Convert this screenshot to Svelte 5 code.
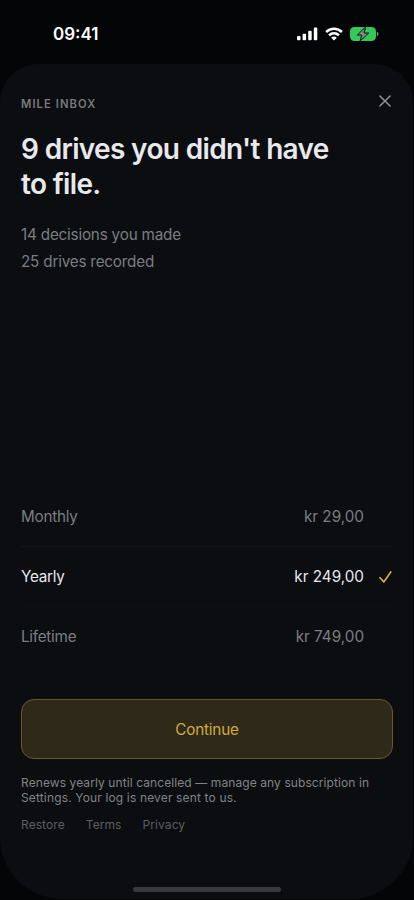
<script>
	let selected = $state('yearly');

	const stats = ['14 decisions you made', '25 drives recorded'];

	const plans = [
		{ id: 'monthly', name: 'Monthly', price: 'kr 29,00' },
		{ id: 'yearly', name: 'Yearly', price: 'kr 249,00' },
		{ id: 'lifetime', name: 'Lifetime', price: 'kr 749,00' }
	];
</script>

<div class="screen">
	<header class="status">
		<span class="time">09:41</span>
		<div class="indicators">
			<svg width="21" height="14" viewBox="0 0 21 14" fill="#fff">
				<rect x="0" y="9" width="3.5" height="4.3" rx="1.1" />
				<rect x="5.6" y="6.7" width="3.5" height="6.6" rx="1.1" />
				<rect x="11.2" y="3.8" width="3.5" height="9.5" rx="1.1" />
				<rect x="16.8" y="0.6" width="3.5" height="12.7" rx="1.1" />
			</svg>
			<svg width="18" height="14" viewBox="0 0 18 14" fill="none" stroke="#fff" stroke-width="2.5">
				<path d="M1.1 5C5.5 .7 12.5 .7 16.9 5" />
				<path d="M4.1 8.3c2.8-2.8 7-2.8 9.8 0" />
				<path d="M9 13.5 6.2 10.7c1.6-1.5 4-1.5 5.6 0z" fill="#fff" stroke="none" />
			</svg>
			<svg width="29" height="16" viewBox="0 0 29 16">
				<rect x="0" y="1" width="26" height="14" rx="4.4" fill="#34c759" />
				<path d="M27 5.8c1.9.7 1.9 3.7 0 4.4z" fill="#34c759" />
				<path d="M15.8.8 7.3 9h4.5L10 15.2 18.7 7H14z" fill="#8a8a85" stroke="#06120a" stroke-width="1" stroke-linejoin="round" />
			</svg>
		</div>
	</header>

	<main class="sheet">
		<div class="top">
			<span class="brand">MILE INBOX</span>
			<button class="close" aria-label="Close">
				<svg width="12" height="12" viewBox="0 0 12 12" fill="none" stroke="#969799" stroke-width="1.4" stroke-linecap="round">
					<path d="M.9.9l10.2 10.2M11.1.9.9 11.1" />
				</svg>
			</button>
		</div>

		<h1>9 drives you didn't have<br />to file.</h1>

		<div class="stats">
			{#each stats as stat}
				<p>{stat}</p>
			{/each}
		</div>

		<div class="plans">
			{#each plans as plan}
				<button class="plan" class:selected={selected === plan.id} onclick={() => (selected = plan.id)}>
					<span class="name">{plan.name}</span>
					<span class="price">{plan.price}</span>
					<span class="mark">
						{#if selected === plan.id}
							<svg width="13" height="12" viewBox="0 0 13 12" fill="none" stroke="#cfac39" stroke-width="1.7" stroke-linecap="round" stroke-linejoin="round">
								<path d="M1 6.7l3.8 4.2L11.8 1" />
							</svg>
						{/if}
					</span>
				</button>
			{/each}
		</div>

		<button class="continue">Continue</button>

		<p class="note">
			Renews yearly until cancelled — manage any subscription in<br />
			<span>Settings. Your log is never sent to us.</span>
		</p>

		<nav class="links">
			<button>Restore</button>
			<button>Terms</button>
			<button>Privacy</button>
		</nav>

		<div class="home"></div>
	</main>
</div>

<style>
	:global(body) {
		background: #040506;
	}

	.screen {
		display: flex;
		flex-direction: column;
		box-sizing: border-box;
		width: 414px;
		height: 900px;
		padding-bottom: 1px;
		background: #040506;
		font-family: Inter, 'Liberation Sans', sans-serif;
		overflow: hidden;
	}

	button {
		padding: 0;
		border: none;
		background: none;
		color: inherit;
		font: inherit;
		letter-spacing: inherit;
		cursor: pointer;
	}

	.status {
		display: flex;
		justify-content: space-between;
		align-items: center;
		box-sizing: border-box;
		height: 64px;
		padding: 4px 35px 0 53px;
	}

	.time {
		color: #fff;
		font-size: 17px;
		font-weight: 600;
	}

	.indicators {
		display: flex;
		align-items: center;
		gap: 7px;
	}

	.sheet {
		display: flex;
		flex-direction: column;
		flex: 1;
		box-sizing: border-box;
		margin-right: 1px;
		padding: 0 20px 0 21px;
		border-radius: 38px 38px 62px 62px;
		background: #0b0d10;
	}

	.top {
		display: flex;
		justify-content: space-between;
		align-items: center;
		height: 66px;
		padding-top: 1px;
		margin-bottom: 2px;
		box-sizing: border-box;
	}

	.brand {
		padding-top: 13px;
		color: #77797b;
		font-size: 11.25px;
		font-weight: 600;
		letter-spacing: 1.05px;
	}

	.close {
		display: flex;
		padding: 7px 2px 0 0;
	}

	h1 {
		margin: 0;
		color: #e8e9ec;
		font-size: 28px;
		font-weight: 600;
		line-height: 35px;
		letter-spacing: -0.66px;
		white-space: nowrap;
	}

	.stats {
		margin-top: 19px;
		color: #7b7e81;
		font-size: 15.25px;
		line-height: 27px;
		letter-spacing: -0.2px;
	}

	.stats p {
		margin: 0;
	}

	.plans {
		margin-top: auto;
	}

	.plan {
		display: flex;
		align-items: center;
		box-sizing: border-box;
		width: 100%;
		height: 60px;
		border-bottom: 1px solid #14171a;
		color: #7b7e81;
		font-size: 15.25px;
	}

	.plan:nth-child(2) {
		border-bottom-color: #0e1013;
	}

	.plan:last-child {
		border-bottom-color: transparent;
	}

	.plan.selected {
		color: #e8e9ec;
	}

	.name {
		letter-spacing: -0.26px;
	}

	.price {
		margin-left: auto;
	}

	.mark {
		display: flex;
		width: 29px;
		padding-left: 15px;
		box-sizing: border-box;
	}

	.continue {
		flex-shrink: 0;
		height: 60px;
		margin-top: 32px;
		border: 1px solid #695a26;
		border-radius: 13px;
		background: #2f2919;
		color: #cfac39;
		font-size: 15.25px;
		letter-spacing: -0.2px;
	}

	.note {
		margin: 16px 0 0;
		color: #818386;
		font-size: 12px;
		line-height: 15px;
		letter-spacing: 0.09px;
		white-space: nowrap;
	}

	.note span {
		letter-spacing: 0.15px;
	}

	.links {
		display: flex;
		gap: 21px;
		margin-top: 12px;
		color: #5b5e61;
		font-size: 12px;
		line-height: 15px;
		letter-spacing: 0.08px;
	}

	.home {
		width: 148px;
		height: 5px;
		margin: 55px auto 7px;
		border-radius: 3px;
		background: #39393c;
	}
</style>
